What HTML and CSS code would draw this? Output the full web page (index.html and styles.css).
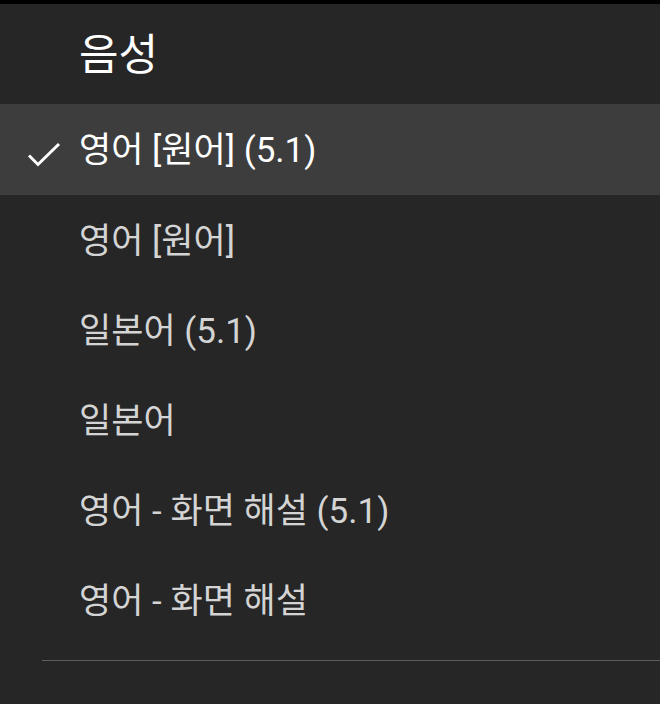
FILE: index.html
```html
<!DOCTYPE html>
<html lang="ko">
<head>
<meta charset="utf-8">
<link rel="stylesheet" href="styles.css">
</head>
<body>
<div class="topbar"></div>
<div class="menu">
  <div class="header">음성</div>
  <div class="item selected">
    <svg class="check" viewBox="0 0 34 26" width="34" height="26"><path d="M2 13.5 L11 22.5 L32 2" fill="none" stroke="#fff" stroke-width="3"/></svg>
    <span>영어 [원어] (5.1)</span>
  </div>
  <div class="item"><span>영어 [원어]</span></div>
  <div class="item"><span>일본어 (5.1)</span></div>
  <div class="item"><span>일본어</span></div>
  <div class="item"><span>영어 - 화면 해설 (5.1)</span></div>
  <div class="item"><span>영어 - 화면 해설</span></div>
  <div class="spacer"></div>
  <div class="divider"></div>
</div>
</body>
</html>
```
FILE: styles.css
```css
html, body {
  margin: 0;
  padding: 0;
  background: #262626;
  width: 660px;
  height: 704px;
  overflow: hidden;
}
body {
  font-family: Roboto, "Noto Sans CJK KR", sans-serif;
  font-weight: 400;
}
.topbar {
  height: 4px;
  background: #000;
}
.menu {
  display: flex;
  flex-direction: column;
}
.header {
  height: 100px;
  display: flex;
  align-items: center;
  padding-left: 79px;
  font-size: 43px;
  color: #fff;
  padding-bottom: 6px;
  box-sizing: border-box;
}
.item {
  height: 90px;
  display: flex;
  align-items: center;
  padding-left: 79px;
  padding-bottom: 6px;
  box-sizing: border-box;
  position: relative;
  font-size: 35px;
  color: #d4d4d4;
}
.item.selected {
  background: #3d3d3d;
  color: #fff;
  height: 91px;
}
.check {
  position: absolute;
  left: 27px;
  top: 38px;
}
.spacer {
  height: 15px;
}
.divider {
  margin-left: 42px;
  height: 1px;
  background: #5c5c5c;
}
```
